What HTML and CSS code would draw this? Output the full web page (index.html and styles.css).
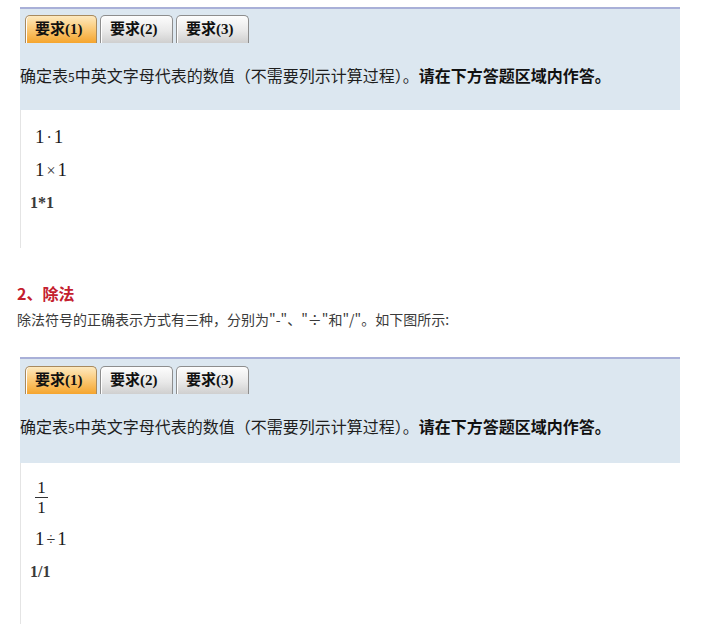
FILE: index.html
```html
<!DOCTYPE html>
<html lang="zh-CN">
<head>
<meta charset="utf-8">
<link rel="stylesheet" href="styles.css">
</head>
<body>
<div class="page">
  <div class="exhibit first">
    <div class="prompt">
      <div class="tabs">
        <span class="tab active">要求(1)</span>
        <span class="tab">要求(2)</span>
        <span class="tab">要求(3)</span>
      </div>
      <p class="instr">确定表<span class="num">5</span>中英文字母代表的数值（不需要列示计算过程）。<b>请在下方答题区域内作答。</b></p>
    </div>
    <div class="answer answer-mul">
      <div class="expr math">1<span class="op">·</span>1</div>
      <div class="expr math">1<span class="op">×</span>1</div>
      <div class="expr plain">1*1</div>
    </div>
  </div>

  <h3 class="heading">2、除法</h3>
  <p class="desc">除法符号的正确表示方式有三种，分别为"-"、"÷"和"/"。如下图所示:</p>

  <div class="exhibit second">
    <div class="prompt">
      <div class="tabs">
        <span class="tab active">要求(1)</span>
        <span class="tab">要求(2)</span>
        <span class="tab">要求(3)</span>
      </div>
      <p class="instr">确定表<span class="num">5</span>中英文字母代表的数值（不需要列示计算过程）。<b>请在下方答题区域内作答。</b></p>
    </div>
    <div class="answer answer-div">
      <div class="frac math"><span class="fn">1</span><span class="fd">1</span></div>
      <div class="expr math">1<span class="op">÷</span>1</div>
      <div class="expr plain">1/1</div>
    </div>
  </div>
</div>
</body>
</html>
```

FILE: styles.css
```css
html, body {
  margin: 0;
  padding: 0;
  background: #ffffff;
}

.page {
  padding: 7px 44px 0 20px;
  font-family: "Noto Sans CJK SC", sans-serif;
  color: #222;
}

.exhibit {
  width: 660px;
}

.prompt {
  border-top: 2px solid #a9b0d8;
  background: #dce7f0;
  padding: 6px 0 21px 0;
}

.second .prompt {
  padding-top: 7px;
  padding-bottom: 23px;
}

.tabs {
  display: flex;
  gap: 3px;
  padding-left: 5px;
}

.tab {
  box-sizing: border-box;
  height: 28px;
  width: 73px;
  border: 1px solid #8d8d8d;
  border-bottom: none;
  border-radius: 5px 5px 0 0;
  background: linear-gradient(#fdfdfd, #e9e9e9 55%, #cfcfcf);
  font-family: "Liberation Serif", "Noto Sans CJK SC", serif;
  font-weight: bold;
  font-size: 15px;
  line-height: 26px;
  padding-left: 9px;
  color: #111;
  box-shadow: inset 1px 0 0 #ffffff;
}

.tab.active {
  width: 72px;
  border-color: #a88a5e;
  background: linear-gradient(#fde9bf, #fbc874 50%, #f5a52e);
}

.instr {
  margin: 20px 0 0 0;
  font-size: 16px;
  line-height: 24px;
  color: #1e1e1e;
}

.instr .num {
  font-size: 12px;
}

.instr b {
  font-weight: bold;
  color: #111;
}

.answer {
  border-left: 1px solid #e4e4e4;
}

.answer-mul {
  padding: 10px 0 29px 0;
}

.answer-div {
  padding: 16px 0 60px 0;
}

.expr {
  height: 33px;
  line-height: 33px;
}

.math {
  padding-left: 14px;
  font-family: "Liberation Serif", serif;
  font-size: 19px;
  color: #1a1a1a;
}

.math .op {
  padding: 0 2px;
  font-size: 16px;
  color: #333;
}

.plain {
  padding-left: 9px;
  font-family: "Liberation Serif", serif;
  font-size: 16px;
  font-weight: bold;
  color: #3a3a3a;
}

.frac {
  display: flex;
  flex-direction: column;
  align-items: center;
  margin-left: 14px;
  padding-left: 0;
  width: 13px;
  line-height: 17px;
  font-size: 17px;
  margin-bottom: 6px;
}

.frac .fn {
  border-bottom: 1px solid #333;
  width: 100%;
  text-align: center;
  padding-bottom: 1px;
}

.frac .fd {
  padding-top: 1px;
}

.heading {
  margin: 33px 0 0 -3px;
  font-size: 16px;
  line-height: 24px;
  font-weight: bold;
  color: #c4202e;
}

.desc {
  margin: 2px 0 26px -3px;
  font-size: 14px;
  line-height: 24px;
  color: #3a3a3a;
}
```
